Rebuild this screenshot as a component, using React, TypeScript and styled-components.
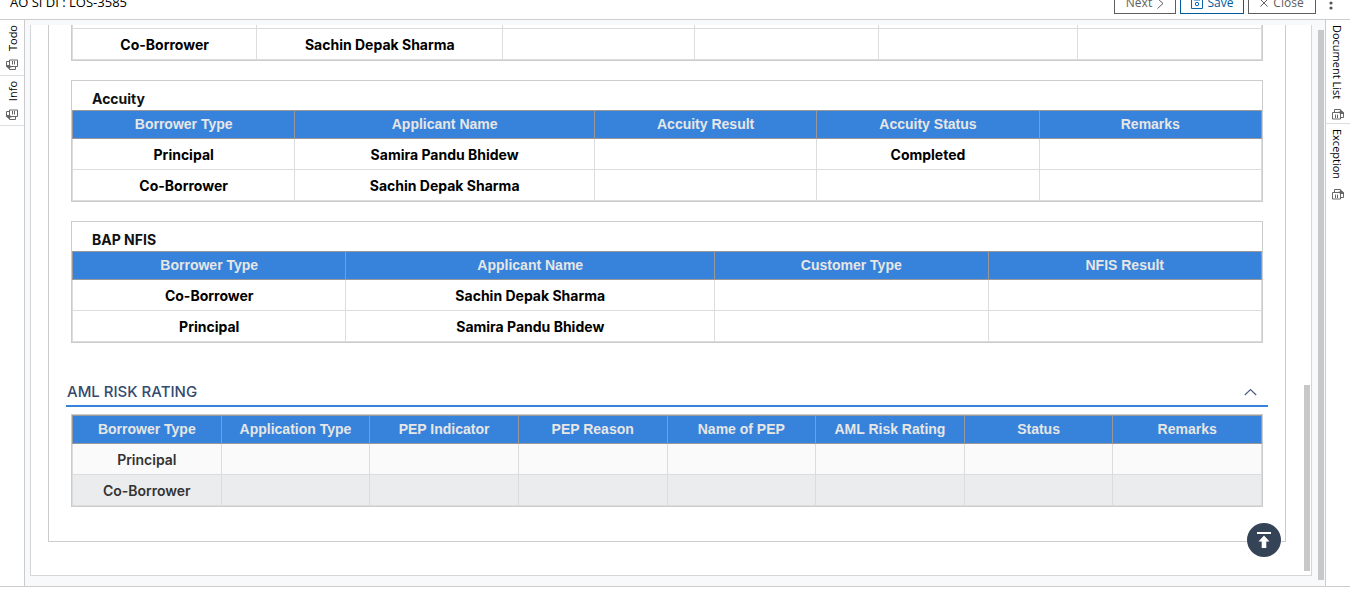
import React from "react";
import styled, { createGlobalStyle } from "styled-components";

const GlobalStyle = createGlobalStyle`
  *, *::before, *::after { box-sizing: border-box; }
  html, body, #root { height: 100%; }
  body {
    margin: 0;
    background: #fff;
    color: #000;
    font-family: "Open Sans", "Noto Sans", sans-serif;
    font-size: 12px;
    overflow: hidden;
  }
`;

const Page = styled.div`
  display: flex;
  flex-direction: column;
  height: 100vh;
  padding-bottom: 15px;
`;

const TopBar = styled.header`
  flex: none;
  display: flex;
  justify-content: space-between;
  align-items: flex-end;
  height: 20px;
  padding: 0 8px 5px 10px;
  border-bottom: 1px solid #ccc;
`;

const Title = styled.h1`
  margin: 0 0 4px;
  font-size: 13px;
  line-height: 16px;
  font-weight: 400;
`;

const Actions = styled.div`
  display: flex;
  align-items: flex-end;
  gap: 4px;
`;

const ActionButton = styled.button<{ $primary?: boolean; $width: number }>`
  display: flex;
  align-items: center;
  justify-content: center;
  gap: 5px;
  width: ${(p) => p.$width}px;
  height: 22px;
  padding: 0;
  border: 1px solid ${(p) => (p.$primary ? "#005a9c" : "#5e5e5e")};
  border-radius: 0;
  background: #fff;
  color: ${(p) => (p.$primary ? "#005a9c" : "#5e5e5e")};
  font: 400 12px/16px "Open Sans", "Noto Sans", sans-serif;
  svg { flex: none; }
`;

const MenuButton = styled.button`
  display: flex;
  align-items: center;
  justify-content: center;
  width: 22px;
  height: 22px;
  padding: 0;
  border: 0;
  background: none;
`;

const Body = styled.div`
  flex: 1;
  min-height: 0;
  display: flex;
  border-bottom: 1px solid #ccc;
`;

const Rail = styled.nav<{ $right?: boolean }>`
  flex: none;
  width: 25px;
  border: 0 solid #ccc;
  border-width: ${(p) => (p.$right ? "0 0 0 1px" : "0 1px 0 0")};
`;

const RailTab = styled.button<{ $flip?: boolean; $last?: boolean }>`
  display: flex;
  flex-direction: column;
  align-items: center;
  gap: ${(p) => (p.$flip ? 8 : 10)}px;
  width: 100%;
  padding: ${(p) => (p.$flip ? "5px 0" : "5px 0 3px")};
  border: 0;
  border-bottom: ${(p) => (p.$last ? "0" : "1px solid #ddd")};
  background: #fff;
  color: #000;
  font: 400 11px/16px "Open Sans", "Noto Sans", sans-serif;
  span {
    writing-mode: vertical-rl;
    margin: ${(p) => (p.$flip ? "0 0 0 2px" : "0 2px 0 0")};
    ${(p) => p.$flip && "transform: rotate(180deg);"}
  }
`;

const Workspace = styled.main`
  flex: 1;
  min-width: 0;
  display: flex;
  padding: 5px 1px 6px 5px;
  background: #f8f9fb;
`;

const Sheet = styled.div`
  flex: 1;
  min-width: 0;
  display: flex;
  margin: 0 6px 4px 0;
  padding-right: 1px;
  border: 1px solid #d5d6d8;
  border-top: 0;
  background: #fff;
`;

const Scroller = styled.div`
  flex: 1;
  min-width: 0;
  display: flex;
  flex-direction: column;
  justify-content: flex-end;
  padding: 0 18px 33px 17px;
  overflow: hidden;
`;

const ScrollTrack = styled.div<{ $top: number; $bottom?: number }>`
  flex: none;
  width: 6px;
  padding: ${(p) => p.$top}px 0 ${(p) => p.$bottom || 0}px;
`;

const Thumb = styled.div`
  height: 100%;
  background: #c8c8c8;
`;

const Form = styled.div`
  position: relative;
  flex: none;
  padding: 0 17px 15px;
  border: 1px solid #ccc;
`;

const Panel = styled.section`
  margin: 0 5px 19px;
  border: 1px solid #ccc;
`;

const PanelTitle = styled.h2`
  margin: 0;
  padding: 8px 20px 0;
  height: 29px;
  color: #111;
  font: 700 14px/20px Inter, "Open Sans", sans-serif;
`;

const Table = styled.table`
  width: 100%;
  border-collapse: collapse;
  table-layout: fixed;
`;

const HeadCell = styled.th`
  height: 28px;
  padding: 0 0 2px;
  border: 1px solid #999;
  background: #3783db;
  color: #e6e6e6;
  font: 700 14px/18px "Liberation Sans", Arial, sans-serif;
`;

const Cell = styled.td<{ $muted?: boolean; $shade?: string }>`
  height: 31px;
  padding: 2px 0 0;
  border: 1px solid #dcdcdc;
  background: ${(p) => p.$shade || "#fff"};
  color: ${(p) => (p.$muted ? "#333" : "#000")};
  font: ${(p) => (p.$muted ? 600 : 700)} 14px/20px Inter, "Open Sans", sans-serif;
  text-align: center;
`;

const SectionHeader = styled.button`
  display: flex;
  align-items: center;
  justify-content: space-between;
  width: 100%;
  height: 28px;
  margin: 36px 0 7px;
  padding: 0 11px 0 1px;
  border: 0;
  border-bottom: 2px solid #3783db;
  background: #fff;
  color: #344a6e;
  font: 500 15px/20px Inter, "Open Sans", sans-serif;
`;

const TopButton = styled.button`
  position: absolute;
  right: 4px;
  bottom: -16px;
  display: flex;
  align-items: center;
  justify-content: center;
  width: 34px;
  height: 34px;
  padding: 0;
  border: 0;
  border-radius: 50%;
  background: #344356;
`;

const CardsIcon = ({ flip }: { flip?: boolean }) => (
  <svg width="12" height="11" viewBox="0 0 12 11" fill="none" stroke="#666">
    <g transform={flip ? "rotate(180 6 5.5)" : undefined}>
      <path d="M.5 3.500h8v6.500h-8zM2.500 3.500v-3h6M3.500 5.500v3.500M5.500 5.500v3.500M9 8.500h2.500v-4" />
      <path d="M6.500 2.500h1.500V0l4 3.500v1.500H8z" fill="#666" stroke="none" />
    </g>
  </svg>
);

const NextIcon = () => (
  <svg width="7" height="11" viewBox="0 0 7 11" fill="none" stroke="#5e5e5e">
    <path d="M.5 .5l5.500 5-5.500 5" />
  </svg>
);

const SaveIcon = () => (
  <svg width="12" height="12" viewBox="0 0 12 12" fill="none" stroke="#0a66b0">
    <path d="M.5 .5h11v11H.500zM3 .5v2.500h6V.500" />
    <circle cx="6" cy="7" r="1.700" />
  </svg>
);

const CloseIcon = () => (
  <svg width="8" height="8" viewBox="0 0 8 8" fill="none" stroke="#5e5e5e">
    <path d="M.5 .5l7 7M7.500 .5l-7 7" />
  </svg>
);

const DotsIcon = () => (
  <svg width="4" height="14" viewBox="0 0 4 14" fill="#555">
    <circle cx="2" cy="2" r="1.600" />
    <circle cx="2" cy="7" r="1.600" />
    <circle cx="2" cy="12" r="1.600" />
  </svg>
);

const ChevronUpIcon = () => (
  <svg width="13" height="8" viewBox="0 0 13 8" fill="none" stroke="#4a5f80" strokeWidth="1.200">
    <path d="M.8 7l5.700-5.500L12.200 7" />
  </svg>
);

const ToTopIcon = () => (
  <svg width="14" height="16" viewBox="0 0 14 16" fill="#fff">
    <path d="M0 0h14v2H0zM7 3.500l5.500 6H9.300V16H4.700V9.500H1.500z" />
  </svg>
);

type GridProps = {
  widths: number[];
  heads?: string[];
  rows: string[][];
  shades?: string[];
  muted?: boolean;
};

const Grid = ({ widths, heads, rows, shades = [], muted }: GridProps) => (
  <Table>
    <colgroup>
      {widths.map((w, i) => (
        <col key={i} width={w + "%"} />
      ))}
    </colgroup>
    {heads && (
      <thead>
        <tr>{heads.map((h) => <HeadCell key={h} scope="col">{h}</HeadCell>)}</tr>
      </thead>
    )}
    <tbody>
      {rows.map((r, i) => (
        <tr key={i}>
          {widths.map((_, j) => (
            <Cell key={j} $muted={muted} $shade={shades[i]}>{r[j]}</Cell>
          ))}
        </tr>
      ))}
    </tbody>
  </Table>
);

export default function App() {
  return (
    <>
      <GlobalStyle />
      <Page>
        <TopBar>
          <Title>AO SI DI : LOS-3585</Title>
          <Actions>
            <ActionButton $width={62}>Next<NextIcon /></ActionButton>
            <ActionButton $width={64} $primary><SaveIcon />Save</ActionButton>
            <ActionButton $width={68}><CloseIcon />Close</ActionButton>
            <MenuButton aria-label="More actions"><DotsIcon /></MenuButton>
          </Actions>
        </TopBar>
        <Body>
          <Rail>
            <RailTab $flip><span>Todo</span><CardsIcon flip /></RailTab>
            <RailTab $flip><span>Info</span><CardsIcon flip /></RailTab>
          </Rail>
          <Workspace>
            <Sheet>
              <Scroller>
                <Form>
                  <Panel>
                    <Grid
                      widths={[15.5, 20.7, 16.1, 15.5, 16.7, 15.5]}
                      rows={[[], ["Co-Borrower", "Sachin Depak Sharma"]]}
                    />
                  </Panel>
                  <Panel>
                    <PanelTitle>Accuity</PanelTitle>
                    <Grid
                      widths={[18.7, 25.2, 18.7, 18.7, 18.7]}
                      heads={["Borrower Type", "Applicant Name", "Accuity Result", "Accuity Status", "Remarks"]}
                      rows={[["Principal", "Samira Pandu Bhidew", "", "Completed"], ["Co-Borrower", "Sachin Depak Sharma"]]}
                    />
                  </Panel>
                  <Panel>
                    <PanelTitle>BAP NFIS</PanelTitle>
                    <Grid
                      widths={[23, 31, 23, 23]}
                      heads={["Borrower Type", "Applicant Name", "Customer Type", "NFIS Result"]}
                      rows={[["Co-Borrower", "Sachin Depak Sharma"], ["Principal", "Samira Pandu Bhidew"]]}
                    />
                  </Panel>
                  <SectionHeader aria-expanded="true">AML RISK RATING<ChevronUpIcon /></SectionHeader>
                  <Panel>
                    <Grid
                      muted
                      shades={["#fafafa", "#ebecee"]}
                      widths={Array(8).fill(12.5)}
                      heads={["Borrower Type", "Application Type", "PEP Indicator", "PEP Reason", "Name of PEP", "AML Risk Rating", "Status", "Remarks"]}
                      rows={[["Principal"], ["Co-Borrower"]]}
                    />
                  </Panel>
                  <TopButton aria-label="Back to top"><ToTopIcon /></TopButton>
                </Form>
              </Scroller>
              <ScrollTrack $top={360} $bottom={4}><Thumb /></ScrollTrack>
            </Sheet>
            <ScrollTrack $top={5}><Thumb /></ScrollTrack>
          </Workspace>
          <Rail $right>
            <RailTab><span>Document List</span><CardsIcon /></RailTab>
            <RailTab $last><span>Exception</span><CardsIcon /></RailTab>
          </Rail>
        </Body>
      </Page>
    </>
  );
}
